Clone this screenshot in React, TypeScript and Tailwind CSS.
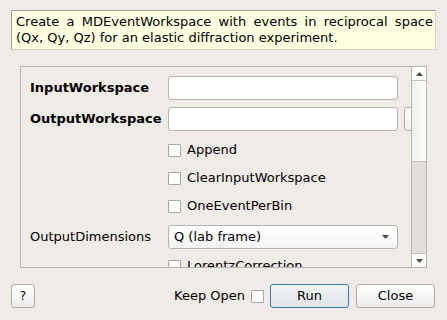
import React from 'react'

const font = { fontFamily: '"DejaVu Sans", "Liberation Sans", sans-serif' }

function CheckBox() {
  return <div className="w-[13px] h-[13px] shrink-0 border border-[#a8a49f] bg-white rounded-[1px]" />
}

function Arrow({ up = false }: { up?: boolean }) {
  return (
    <svg width="7" height="4" viewBox="0 0 7 4" className="block">
      {up ? <polygon points="0,4 7,4 3.5,0" fill="#4a4a4a" /> : <polygon points="0,0 7,0 3.5,4" fill="#4a4a4a" />}
    </svg>
  )
}

function TextRow({ label }: { label: string }) {
  return (
    <div className="flex items-center h-[24px]">
      <div className="w-[138px] shrink-0 font-bold">{label}</div>
      <div className="w-[230px] h-[24px] shrink-0 bg-white border border-[#b6b2ad] rounded-[3px]" />
    </div>
  )
}

function CheckRow({ label, className = '' }: { label: string; className?: string }) {
  return (
    <div className={`flex items-center h-[24px] pl-[138px] ${className}`}>
      <CheckBox />
      <span className="ml-[6px]">{label}</span>
    </div>
  )
}

export default function App() {
  return (
    <div className="w-[447px] h-[320px] bg-[#efebe7] text-[13px] text-black overflow-hidden" style={font}>
      {/* 说明 */}
      <div className="pt-[10px] px-[11px]">
        <div className="h-[40px] bg-[#ffffe1] border border-t-[#a09d98] border-l-[#a09d98] border-r-[#d6d3cf] border-b-[#d6d3cf] pl-[4px] pr-[2px] pt-[3px] leading-[16px] text-justify">
          Create a MDEventWorkspace with events in reciprocal space (Qx, Qy, Qz) for an elastic diffraction experiment.
        </div>
      </div>

      {/* 属性面板 */}
      <div className="ml-[20px] mt-[16px] w-[407px] h-[202px] border border-[#b8b4af] flex">
        <div className="flex-1 overflow-hidden pl-[9px] pt-[9px]">
          <TextRow label="InputWorkspace" />
          <div className="flex items-center h-[24px] mt-[7px]">
            <div className="w-[138px] shrink-0 font-bold">OutputWorkspace</div>
            <div className="w-[230px] h-[24px] shrink-0 bg-white border border-[#b6b2ad] rounded-[3px]" />
            <div className="ml-[6px] w-[30px] h-[24px] shrink-0 bg-gradient-to-b from-white to-[#eeeeee] border border-[#b0aca7] rounded-[3px]" />
          </div>
          <CheckRow label="Append" className="mt-[7px]" />
          <CheckRow label="ClearInputWorkspace" className="mt-[4px]" />
          <CheckRow label="OneEventPerBin" className="mt-[4px]" />
          <div className="flex items-center h-[24px] mt-[7px]">
            <div className="w-[138px] shrink-0">OutputDimensions</div>
            <div className="w-[230px] h-[24px] shrink-0 bg-gradient-to-b from-white to-[#f4f4f4] border border-[#b6b2ad] rounded-[3px] flex items-center pl-[5px] pr-[8px]">
              <span className="flex-1">Q (lab frame)</span>
              <Arrow />
            </div>
          </div>
          <CheckRow label="LorentzCorrection" className="mt-[5px]" />
        </div>

        {/* 滚动条 */}
        <div className="w-[15px] shrink-0 border-l border-[#b8b4af] flex flex-col">
          <div className="h-[14px] bg-white border-b border-[#c4c0bb] flex items-center justify-center">
            <Arrow up />
          </div>
          <div className="h-[81px] bg-gradient-to-r from-[#eeeeee] to-white border-b border-[#c4c0bb]" />
          <div className="flex-1 bg-[#e2dfdb]" />
          <div className="h-[14px] bg-white border-t border-[#c4c0bb] flex items-center justify-center">
            <Arrow />
          </div>
        </div>
      </div>

      {/* 底部按钮 */}
      <div className="flex items-center mt-[16px] pl-[11px] pr-[12px] h-[24px]">
        <button className="w-[24px] h-[24px] bg-gradient-to-b from-white to-[#ececec] border border-[#b0aca7] rounded-[3px] text-[12px]">?</button>
        <div className="flex-1" />
        <span>Keep Open</span>
        <div className="ml-[6px]">
          <CheckBox />
        </div>
        <button className="ml-[6px] w-[79px] h-[24px] bg-gradient-to-b from-[#f2f4f6] to-[#dfe4e8] border border-[#3a7cae] rounded-[3px]">Run</button>
        <button className="ml-[7px] w-[79px] h-[24px] bg-gradient-to-b from-white to-[#ececec] border border-[#b0aca7] rounded-[3px]">Close</button>
      </div>
    </div>
  )
}
